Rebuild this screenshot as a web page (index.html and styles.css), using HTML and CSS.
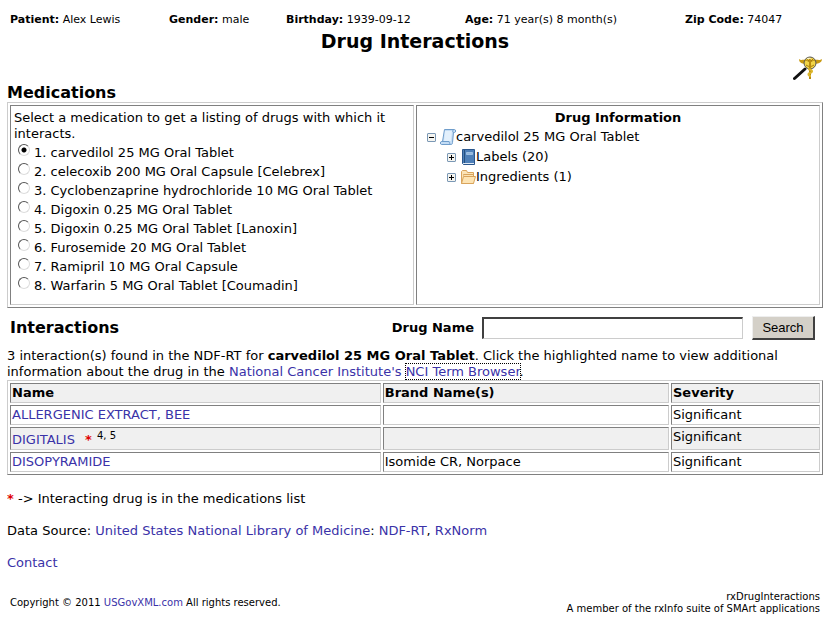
FILE: index.html
```html
<!DOCTYPE html>
<html lang="en">
<head>
    <meta charset="utf-8">
    <title>Drug Interactions</title>
    <link rel="stylesheet" href="styles.css">
</head>
<body>
    <div class="patient">
        <div><b>Patient:</b> Alex Lewis</div>
        <div><b>Gender:</b> male</div>
        <div><b>Birthday:</b> 1939-09-12</div>
        <div><b>Age:</b> 71 year(s) 8 month(s)</div>
        <div><b>Zip Code:</b> 74047</div>
    </div>
    <h1>Drug Interactions</h1>
    <div class="logo">
        <svg width="30" height="26" viewBox="0 0 30 26">
            <path d="M1.500 23.500L12 14" stroke="#111" stroke-width="3" stroke-linecap="round"/>
            <path d="M6 4c0 4 3 5 9 5l2-1 2 1c6 0 10-1 10-5-3 2-5 0-7 1l-5 2-5-2c-2-1-4 1-6-1z" fill="#c99a12"/>
            <circle cx="17" cy="8" r="6" fill="#f2d548" stroke="#555"/>
            <path d="M12 6c2-2 3 1 5 1s3-3 5-1M13 10c3 2 5 2 8 0M14 4l3 3 3-3" stroke="#a87c08" fill="none"/>
            <path d="M17 3v21" stroke="#b98c10" stroke-width="2"/>
            <path d="M15 14c5 1 5 3 2 4s-1 3 1 3" stroke="#dcb62c" stroke-width="2" fill="none"/>
            <path d="M14 4c1-1 3-1 4 0" stroke="#fffbe0" fill="none"/>
        </svg>
    </div>

    <h2>Medications</h2>
    <div class="panels">
        <div class="panel">
            <p>Select a medication to get a listing of drugs with which it interacts.</p>
            <ul class="meds">
                <li><input type="radio" name="med" id="med1" checked><label for="med1">1. carvedilol 25 MG Oral Tablet</label></li>
                <li><input type="radio" name="med" id="med2"><label for="med2">2. celecoxib 200 MG Oral Capsule [Celebrex]</label></li>
                <li><input type="radio" name="med" id="med3"><label for="med3">3. Cyclobenzaprine hydrochloride 10 MG Oral Tablet</label></li>
                <li><input type="radio" name="med" id="med4"><label for="med4">4. Digoxin 0.25 MG Oral Tablet</label></li>
                <li><input type="radio" name="med" id="med5"><label for="med5">5. Digoxin 0.25 MG Oral Tablet [Lanoxin]</label></li>
                <li><input type="radio" name="med" id="med6"><label for="med6">6. Furosemide 20 MG Oral Tablet</label></li>
                <li><input type="radio" name="med" id="med7"><label for="med7">7. Ramipril 10 MG Oral Capsule</label></li>
                <li><input type="radio" name="med" id="med8"><label for="med8">8. Warfarin 5 MG Oral Tablet [Coumadin]</label></li>
            </ul>
        </div>
        <div class="panel">
            <h3>Drug Information</h3>
            <ul class="tree">
                <li>
                    <div class="node">
                        <button type="button" class="toggle" aria-label="Collapse">
                            <svg width="9" height="9"><path d="M2 4.500h5" stroke="#000"/></svg>
                        </button>
                        <svg width="16" height="16" viewBox="0 0 16 16">
                            <path d="M4.500 .5h10c1.500 0 1.500 3 0 3h-1l-1 10c0 1.500-.5 2-2 2h-9c-1.500 0-1.500-3 0-3h1z" fill="#c3dcf4" stroke="#6f9dcb"/>
                            <path d="M1.500 12.500h7.500c.5 1 .5 2 1.500 3" fill="none" stroke="#6f9dcb"/>
                            <path d="M5 2h7l-1 10H4z" fill="#e3f0fc"/>
                            <path d="M13.500 3.500c-1 0-1-2 0-3" fill="none" stroke="#6f9dcb"/>
                        </svg>
                        <span>carvedilol 25 MG Oral Tablet</span>
                    </div>
                    <ul>
                        <li class="node">
                            <button type="button" class="toggle" aria-label="Expand">
                                <svg width="9" height="9"><path d="M2 4.500h5M4.500 2v5" stroke="#000"/></svg>
                            </button>
                            <svg width="16" height="16" viewBox="0 0 16 16">
                                <path d="M2.500 .5h12v15h-11l-1-1z" fill="#4d7fb8" stroke="#2a568c"/>
                                <path d="M4.500 1v13" stroke="#25507f"/>
                                <path d="M6.500 3.500h6v2h-6z" fill="#91b6dc" stroke="#9dbfe2"/>
                                <path d="M3 14.500h11" stroke="#dfe9f4"/>
                            </svg>
                            <span>Labels (20)</span>
                        </li>
                        <li class="node">
                            <button type="button" class="toggle" aria-label="Expand">
                                <svg width="9" height="9"><path d="M2 4.500h5M4.500 2v5" stroke="#000"/></svg>
                            </button>
                            <svg width="16" height="16" viewBox="0 0 16 16">
                                <path d="M1.500 14.500v-12l1-1h4l1 2h6v11z" fill="#fbe3b6" stroke="#d9a45c"/>
                                <path d="M3.500 6.500v-1h10" fill="none" stroke="#d9a45c"/>
                                <path d="M1.500 14.500l2-7h12l-2 7z" fill="#fde4b4" stroke="#d9a45c"/>
                            </svg>
                            <span>Ingredients (1)</span>
                        </li>
                    </ul>
                </li>
            </ul>
        </div>
    </div>

    <form class="search">
        <h2>Interactions</h2>
        <label for="drug_name">Drug Name</label>
        <input type="text" id="drug_name">
        <button type="button">Search</button>
    </form>

    <p>3 interaction(s) found in the NDF-RT for <b>carvedilol 25 MG Oral Tablet</b>. Click the highlighted name to view additional information about the drug in the <a href="#">National Cancer Institute's</a> <a href="#" class="focused">NCI Term Browser</a>.</p>
    <table class="interactions">
        <thead>
            <tr>
                <th class="name">Name</th>
                <th>Brand Name(s)</th>
                <th class="severity">Severity</th>
            </tr>
        </thead>
        <tbody>
            <tr>
                <td><a href="#">ALLERGENIC EXTRACT, BEE</a></td>
                <td></td>
                <td>Significant</td>
            </tr>
            <tr class="alt">
                <td><a href="#">DIGITALIS</a> <b class="star">*</b> <sup>4, 5</sup></td>
                <td></td>
                <td>Significant</td>
            </tr>
            <tr>
                <td><a href="#">DISOPYRAMIDE</a></td>
                <td>Isomide CR, Norpace</td>
                <td>Significant</td>
            </tr>
        </tbody>
    </table>

    <div class="notes">
        <p><b class="key">*</b> -&gt; Interacting drug is in the medications list</p>
        <p>Data Source: <a href="#">United States National Library of Medicine</a>: <a href="#">NDF-RT</a>, <a href="#">RxNorm</a></p>
        <p><a href="#">Contact</a></p>
    </div>

    <div class="footer">
        <div>Copyright © 2011 <a href="#">USGovXML.com</a> All rights reserved.</div>
        <div class="suite">rxDrugInteractions<br>A member of the rxInfo suite of SMArt applications</div>
    </div>
</body>
</html>
```
FILE: styles.css
```css
body {
    margin: 12px 5px 0 7px;
    background: #fff;
    color: #000;
    font-family: Verdana, "DejaVu Sans", sans-serif;
    font-size: 13px;
    line-height: 16px;
}
h1, h2, h3, p, ul {
    margin: 0;
    padding: 0;
}
li {
    list-style: none;
}
a {
    color: #3a32a8;
    text-decoration: none;
}
h1 {
    font-size: 19px;
    line-height: 28px;
    text-align: center;
}
h2 {
    font-size: 16px;
    line-height: 18px;
}
h3 {
    font-size: 13px;
    text-align: center;
}
.patient {
    display: grid;
    grid-template-columns: 159fr 117fr 179fr 220fr 138fr;
    padding-left: 3px;
    font-size: 11px;
    line-height: 15px;
}
.logo {
    display: flex;
    justify-content: flex-end;
    height: 29px;
}
.panels {
    display: grid;
    grid-template-columns: 1fr 1fr;
    gap: 2px;
    padding: 2px;
    border: 1px solid;
    border-color: #ccc #808080 #808080 #ccc;
}
.panel {
    padding: 4px 3px 9px;
    border: 1px solid;
    border-color: #808080 #ccc #ccc #808080;
}
.meds {
    padding: 1px 0 0 4px;
}
.meds li {
    display: flex;
    align-items: flex-start;
    gap: 4px;
    line-height: 19px;
}
.meds input {
    appearance: none;
    width: 12px;
    height: 12px;
    margin: 1px 0 0;
    box-sizing: border-box;
    border: 1px solid;
    border-color: #555 #ddd #ddd #555;
    border-radius: 50%;
}
.meds input:checked {
    background: radial-gradient(circle, #000 2px, #fff 3px);
}
.tree {
    padding: 1px 0 0 7px;
}
.tree ul {
    padding-left: 20px;
}
.node {
    display: flex;
    align-items: center;
    height: 20px;
}
.toggle {
    display: flex;
    margin: 0 4px 0 0;
    padding: 0;
    border: 1px solid #7b98b5;
    border-radius: 1px;
    background: #f4f4f0;
}
.toggle svg {
    margin: -1px;
}
.search {
    display: flex;
    align-items: center;
    padding: 8px 8px 8px 3px;
}
.search h2 {
    flex: 1;
}
.search label {
    font-weight: bold;
}
.search input {
    width: 261px;
    height: 22px;
    margin: 0 9px 0 8px;
    box-sizing: border-box;
    border: 1px solid;
    border-width: 2px 1px 1px 2px;
    border-color: #404040 #ccc #ccc #404040;
}
.search button {
    width: 63px;
    height: 24px;
    padding: 0;
    border: 1px solid;
    border-width: 1px 2px 2px 1px;
    border-color: #eee #404040 #404040 #eee;
    background: #d4d0c8;
    font: 13px "Liberation Sans", Arial, sans-serif;
}
.focused {
    outline: 1px dotted #000;
}
.interactions {
    width: 100%;
    border: 1px solid;
    border-color: #ccc #808080 #808080 #ccc;
    border-spacing: 2px;
}
.interactions th,
.interactions td {
    padding: 1px;
    border: 1px solid;
    border-color: #808080 #ccc #ccc #808080;
    text-align: left;
    vertical-align: top;
}
.interactions th,
.alt {
    background: #f0f0f0;
}
.name {
    width: 46%;
}
.severity {
    width: 145px;
}
sup {
    margin-left: 1px;
    font-size: 10px;
    line-height: 14px;
}
.star,
.key {
    color: #e00000;
}
.star {
    margin-left: 6px;
}
.notes p {
    margin: 16px 0;
}
.footer {
    display: flex;
    justify-content: space-between;
    align-items: center;
    margin-top: 20px;
    padding: 0 3px;
    font-size: 10px;
    line-height: 12px;
}
.suite {
    text-align: right;
}
```
